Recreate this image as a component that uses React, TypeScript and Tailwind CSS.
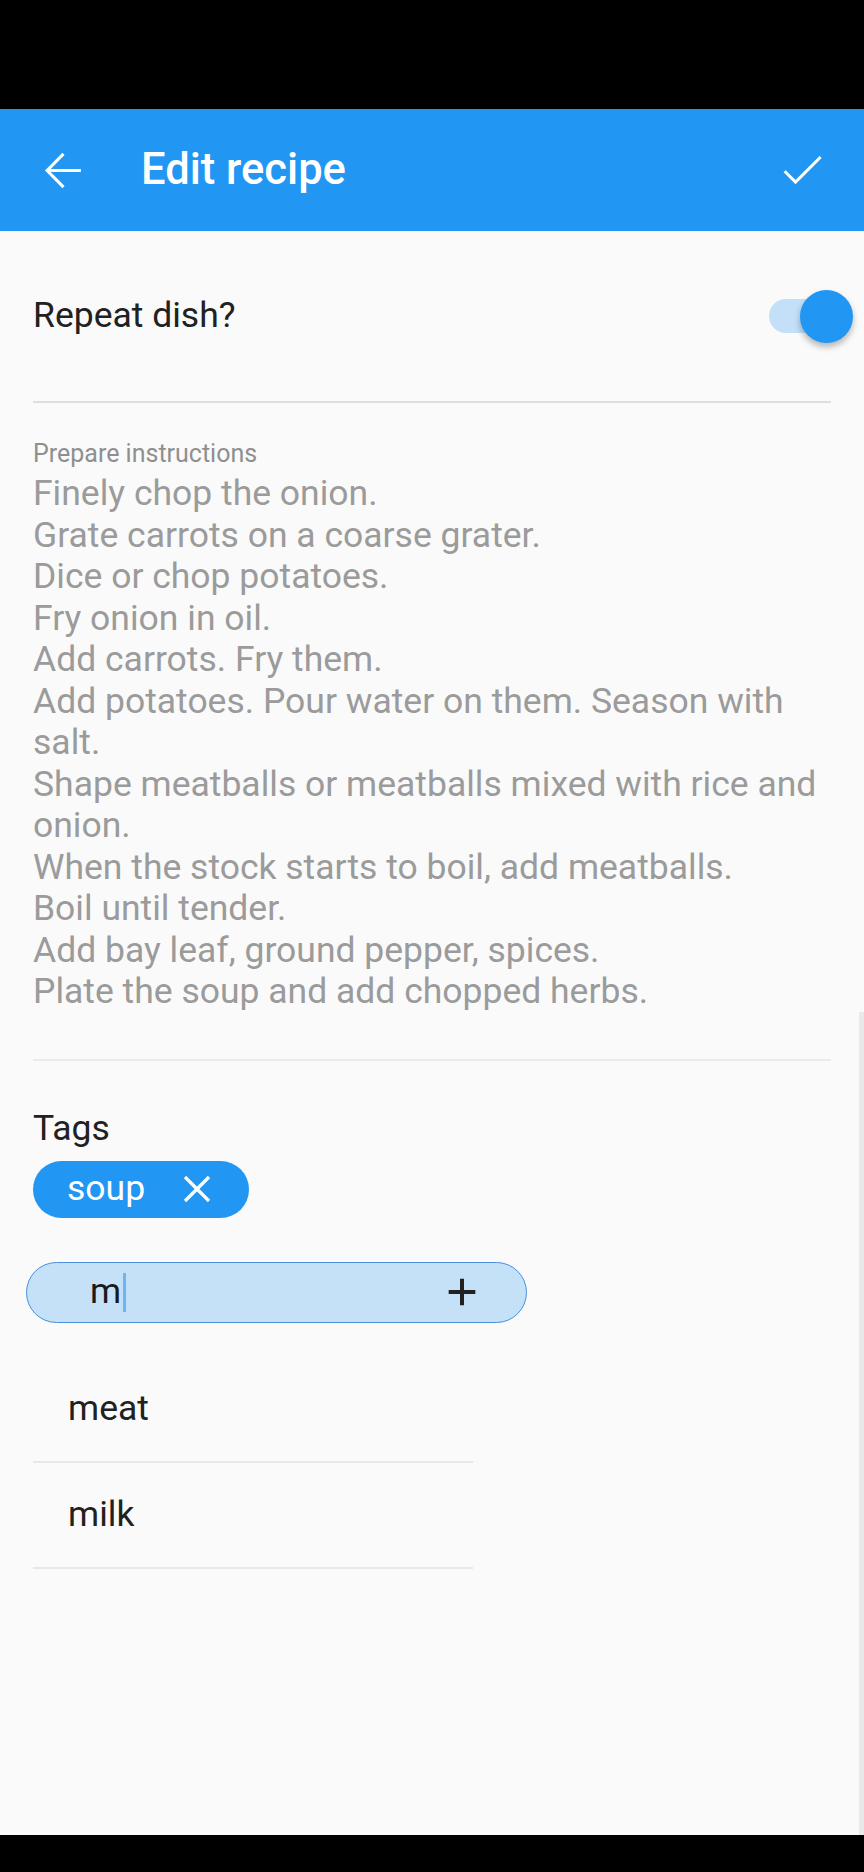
const steps = [
  'Finely chop the onion.',
  'Grate carrots on a coarse grater.',
  'Dice or chop potatoes.',
  'Fry onion in oil.',
  'Add carrots. Fry them.',
  'Add potatoes. Pour water on them. Season with salt.',
  'Shape meatballs or meatballs mixed with rice and onion.',
  'When the stock starts to boil, add meatballs.',
  'Boil until tender.',
  'Add bay leaf, ground pepper, spices.',
  'Plate the soup and add chopped herbs.',
]

const suggestions = ['meat', 'milk']

function BackIcon() {
  return (
    <svg width="51" height="51" viewBox="0 0 24 24" fill="none" stroke="white" strokeWidth="1.45">
      <path d="M20.2 12H4.6M12 4.2L4.3 12l7.7 7.8" />
    </svg>
  )
}

function CheckIcon() {
  return (
    <svg width="52" height="52" viewBox="0 0 24 24" fill="none" stroke="white" strokeWidth="1.4">
      <path d="M4 12.6l5 5L20.6 6" />
    </svg>
  )
}

function Toggle() {
  return (
    <div className="relative h-[53px] w-[84px]">
      <div className="absolute left-0 top-[9px] h-[34px] w-[76px] rounded-full bg-[#c3e0f8]" />
      <div className="absolute right-0 top-0 h-[53px] w-[53px] rounded-full bg-[#2196f3] shadow-[0_4px_6px_rgba(0,0,0,0.28)]" />
    </div>
  )
}

export default function App() {
  return (
    <div className="relative flex h-[1872px] w-[864px] flex-col overflow-hidden bg-[#fafafa] font-['Roboto',sans-serif]">
      <div className="h-[109px] bg-black" />

      <header className="flex h-[122px] items-center bg-[#2196f3] text-white">
        <div className="ml-[38px] flex items-center">
          <BackIcon />
        </div>
        <h1 className="ml-[52px] text-[43.5px] font-medium leading-none">Edit recipe</h1>
        <div className="ml-auto mr-[36px] flex items-center">
          <CheckIcon />
        </div>
      </header>

      <div className="flex h-[170px] items-center justify-between pl-[33px] pr-[11px]">
        <span className="text-[35.5px] text-[#212121]">Repeat dish?</span>
        <Toggle />
      </div>
      <div className="mx-[33px] h-[2px] bg-[#dedede]" />

      <section className="px-[33px] pt-[36px]">
        <p className="text-[25px] leading-[30px] text-[#8f8f8f]">Prepare instructions</p>
        <div className="mt-[4px] text-[35.5px] leading-[41.5px] text-[#9b9b9b]">
          {steps.map((s) => (
            <p key={s}>{s}</p>
          ))}
        </div>
      </section>
      <div className="mx-[33px] mt-[46px] h-[2px] bg-[#ebebeb]" />

      <section className="px-[33px] pt-[47px]">
        <p className="text-[35.5px] leading-[40px] text-[#212121]">Tags</p>
        <div className="mt-[13px] flex">
          <div className="flex h-[57px] w-[216px] items-center rounded-full bg-[#2196f3] pl-[34px] text-white">
            <span className="text-[35.5px] leading-none">soup</span>
            <svg className="ml-[36px]" width="32" height="32" viewBox="0 0 24 24" fill="none" stroke="white" strokeWidth="2.4">
              <path d="M3 3l18 18M21 3L3 21" />
            </svg>
          </div>
        </div>
      </section>

      <div className="ml-[26px] mt-[44px] flex h-[61px] w-[501px] items-center rounded-full border border-[#4a8fdb] bg-[#c5e1f7] pl-[63px] pr-[48px]">
        <span className="text-[35.5px] leading-none text-[#1a1a1a]">m</span>
        <span className="ml-[2px] h-[39px] w-[3px] bg-[#6bb5f5]" />
        <svg className="ml-auto" width="32" height="32" viewBox="0 0 24 24" fill="none" stroke="#212121" strokeWidth="3">
          <path d="M12 2v20M2 12h20" />
        </svg>
      </div>

      <ul className="mt-[34px] w-[473px] pl-[33px]">
        {suggestions.map((t) => (
          <li key={t} className="flex h-[106px] items-center border-b-2 border-[#e8e8e8] pl-[35px] text-[35.5px] text-[#212121]">
            {t}
          </li>
        ))}
      </ul>

      <div className="absolute right-0 top-[1012px] h-[823px] w-[5px] bg-[#e9e9e9]" />
      <div className="mt-auto h-[37px] bg-black" />
    </div>
  )
}
